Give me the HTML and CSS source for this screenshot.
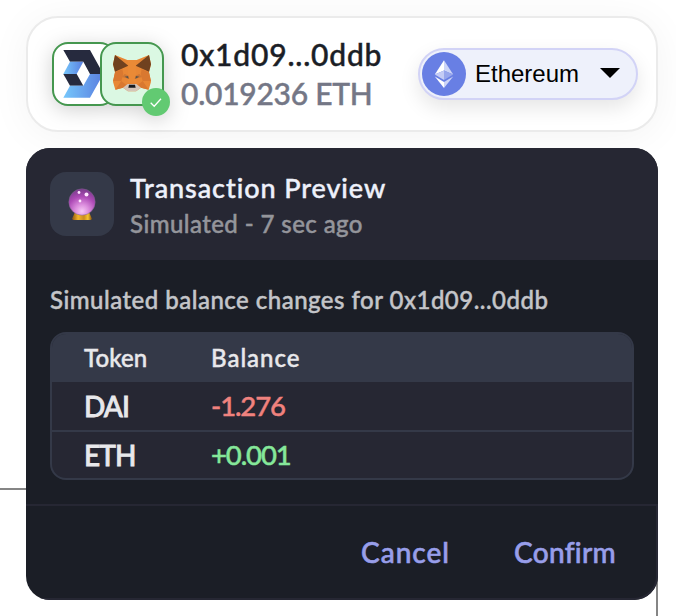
FILE: index.html
```html
<!DOCTYPE html>
<html lang="en">
<head>
<meta charset="utf-8">
<title>Transaction Preview</title>
<link rel="stylesheet" href="styles.css">
</head>
<body>
<div class="guide guide-left"></div>
<div class="guide guide-right"></div>
<main class="stack">
  <section class="account">
    <div class="wallets">
      <div class="wallet">
        <svg viewBox="42 42 180 180">
          <defs><linearGradient id="blue" x1="0" x2="1"><stop offset="0" stop-color="#76c7fb"/><stop offset="1" stop-color="#5a7fe0"/></linearGradient></defs>
          <path fill="#262a3e" d="M70 60H150L190 132H150L130 95H90Z"/>
          <path fill="url(#blue)" d="M90 95H130L110 132H70Z"/>
          <path fill="#262a3e" d="M70 132H110L130 167H90Z"/>
          <path fill="url(#blue)" d="M150 132H190L150 203H70L90 167H130Z"/>
        </svg>
      </div>
      <div class="wallet wallet-active">
        <svg viewBox="186 42 180 180">
          <path fill="#e88735" d="M225 75L262 90H290L327 75L333 103L327 127L333 155L326 179L303 173L288 184H264L249 173L226 179L219 155L225 127L219 103Z"/>
          <path fill="#70411f" d="M225 75L265 107L245 116L225 125L219 103ZM327 75L287 107L307 116L327 125L333 103Z"/>
          <path fill="#d97830" d="M225 127L247 118L250 132L244 153H219ZM327 127L305 118L302 132L308 153H333Z"/>
          <path fill="#ea8a36" d="M265 107L262 90H290L287 107L290 158H262Z"/>
          <path fill="#d97830" d="M244 153L226 179L249 173L259 165ZM308 153L326 179L303 173L293 165Z"/>
          <path fill="#ce7735" d="M246 141L254 132L266 137L268 147ZM306 141L298 132L286 137L284 147Z"/>
          <path fill="#5b5348" d="M254 140L264 138L266 146ZM298 140L288 138L286 146Z"/>
          <path fill="#d5c5b8" d="M249 173L263 162H289L303 173L288 184H264Z"/>
          <path fill="#171b20" d="M267 164H285L287 173H265Z"/>
        </svg>
      </div>
      <div class="badge"><svg viewBox="0 0 28 28"><path d="M8.7 14.8L12.2 18.2L19 10.8"/></svg></div>
    </div>
    <div class="account-text">
      <div class="address">0x1d09...0ddb</div>
      <div class="amount">0.019236 ETH</div>
    </div>
    <button class="network">
      <svg class="eth" viewBox="0 0 44 44">
        <circle cx="22" cy="22" r="22" fill="#687fe4"/>
        <path fill="#fff" d="M22 8.3L12.8 22.5L22 18.5Z"/>
        <path fill="#cdd5f7" d="M22 8.3L31.2 22.5L22 18.5Z"/>
        <path fill="#c4ccf5" d="M12.8 22.5L22 18.5V28Z"/>
        <path fill="#98a7ec" d="M31.2 22.5L22 18.5V28Z"/>
        <path fill="#fff" d="M12.8 24.5L22 30V36Z"/>
        <path fill="#cdd5f7" d="M31.2 24.5L22 30V36Z"/>
      </svg>
      <span class="network-name">Ethereum</span>
      <svg class="caret" viewBox="0 0 20 10"><path d="M0 0H20L10 10Z"/></svg>
    </button>
  </section>

  <section class="preview">
    <header class="preview-head">
      <div class="orb">
        <svg viewBox="0 0 30 34">
          <defs>
            <radialGradient id="ball" cx=".5" cy=".85" r=".85"><stop offset="0" stop-color="#f6c8f5"/><stop offset=".3" stop-color="#dc8ede"/><stop offset=".65" stop-color="#ad4ab6"/><stop offset="1" stop-color="#7a3a8c"/></radialGradient>
            <linearGradient id="gold" x1="0" x2="1"><stop offset="0" stop-color="#8d5514"/><stop offset=".3" stop-color="#f2b42a"/><stop offset=".6" stop-color="#c98b20"/><stop offset=".8" stop-color="#f7c52f"/><stop offset="1" stop-color="#84500f"/></linearGradient>
          </defs>
          <path fill="url(#gold)" d="M7.5 26H22.500L24.800 31.500Q25 33 23 33H7Q5 33 5.200 31.500Z"/>
          <circle cx="15" cy="15" r="13.200" fill="url(#ball)" stroke="#7d638d" stroke-width=".5"/>
          <circle cx="12" cy="5.500" r="1.400" fill="#ffe6ff"/>
          <circle cx="19.500" cy="7.500" r="2" fill="#ffe6ff"/>
          <circle cx="13" cy="14" r="1.400" fill="#ffe6ff"/>
        </svg>
      </div>
      <div>
        <h1 class="title">Transaction Preview</h1>
        <p class="subtitle">Simulated - 7 sec ago</p>
      </div>
    </header>
    <div class="preview-body">
      <p class="caption">Simulated balance changes for 0x1d09...0ddb</p>
      <div class="table">
        <div class="row row-head"><span class="th-token">Token</span><span class="th-balance">Balance</span></div>
        <div class="row"><span class="symbol">DAI</span><span class="negative">-1.276</span></div>
        <div class="row"><span class="symbol">ETH</span><span class="positive">+0.001</span></div>
      </div>
    </div>
    <footer class="actions">
      <button class="action cancel">Cancel</button>
      <button class="action confirm">Confirm</button>
    </footer>
  </section>
</main>
</body>
</html>
```
FILE: styles.css
```css
* { box-sizing: border-box; }
body {
  margin: 0;
  width: 676px;
  height: 616px;
  overflow: hidden;
  position: relative;
  background: #fff;
  font-family: Lato, "Liberation Sans", sans-serif;
  font-weight: 500;
  -webkit-text-stroke: 0.45px currentColor;
}
svg { display: block; }
h1, p { margin: 0; font-weight: inherit; }
button { font: inherit; border: 0; background: none; padding: 0; }

.guide { position: absolute; background: #858585; }
.guide-left { left: 0; top: 488px; width: 26px; height: 2px; }
.guide-right { left: 656px; top: 570px; width: 2px; height: 46px; }

.stack {
  position: relative;
  display: flex;
  flex-direction: column;
  gap: 16px;
  padding: 16px 18px 16px 26px;
}

.account {
  display: flex;
  align-items: center;
  height: 116px;
  padding: 0 18px 0 24px;
  border: 2px solid #ebebeb;
  border-radius: 32px;
  background: #fff;
  box-shadow: 0 4px 40px rgba(0, 0, 0, 0.05);
}
.wallets {
  position: relative;
  display: flex;
  flex: none;
  width: 112px;
  filter: drop-shadow(0 4px 10px rgba(0, 0, 0, 0.18));
}
.wallet {
  flex: none;
  width: 64px;
  height: 64px;
  overflow: hidden;
  border: 2px solid #45974f;
  border-radius: 16px;
  background: #fff;
}
.wallet-active { margin-left: -16px; background: #dbf8e3; }
.badge {
  position: absolute;
  right: -6px;
  bottom: -10px;
  width: 28px;
  height: 28px;
  border-radius: 50%;
  background: #62ca72;
}
.badge path { fill: none; stroke: #fff; stroke-width: 1.3; }

.account-text { flex: 1; padding-left: 17px; white-space: nowrap; }
.address, .amount { height: 40px; line-height: 40px; font-size: 30px; }
.address { color: #1b1e26; letter-spacing: 0.8px; }
.amount { line-height: 38px; color: #747786; letter-spacing: -0.25px; }

.network {
  display: flex;
  align-items: center;
  width: 220px;
  height: 52px;
  padding: 0 16px 0 2px;
  border: 2px solid #d2d3f6;
  border-radius: 26px;
  background: #eef1fb;
  box-shadow: 0 8px 20px rgba(0, 0, 0, 0.1);
  -webkit-text-stroke: 0;
}
.eth { width: 44px; height: 44px; }
.network-name {
  flex: 1;
  padding-left: 9px;
  text-align: left;
  font: 24px "Liberation Sans", Arial, sans-serif;
  color: #000;
}
.caret { width: 20px; height: 10px; margin-top: -2px; }

.preview {
  height: 452px;
  overflow: hidden;
  border-radius: 24px;
  background: #1b1e26;
  display: flex;
  flex-direction: column;
  white-space: nowrap;
}
.preview-head {
  display: flex;
  gap: 16px;
  height: 112px;
  padding: 24px;
  background: #262733;
}
.orb {
  display: grid;
  place-items: center;
  width: 64px;
  height: 64px;
  border-radius: 16px;
  background: #343948;
}
.orb svg { width: 30px; height: 34px; }
.title { height: 34px; line-height: 32px; font-size: 27px; color: #eef1fb; letter-spacing: 0.92px; }
.subtitle { height: 36px; line-height: 36px; font-size: 24px; color: #94959b; letter-spacing: 0.42px; }

.preview-body { height: 244px; padding: 24px 24px 0; }
.caption { height: 32px; margin-bottom: 16px; line-height: 32px; font-size: 24px; color: #c4c5c9; letter-spacing: 0.48px; }
.table {
  height: 148px;
  overflow: hidden;
  border: 2px solid #343948;
  border-radius: 16px;
  background: #262733;
}
.row {
  display: grid;
  grid-template-columns: 127px 1fr;
  align-items: center;
  height: 48px;
  padding-left: 32px;
  font-size: 28px;
  line-height: 44px;
  color: #e8e8eb;
}
.row-head { background: #343948; font-size: 24px; }
.th-token { letter-spacing: 0.1px; }
.th-balance { letter-spacing: 1px; }
.symbol { letter-spacing: -0.9px; -webkit-text-stroke-width: 0.8px; }
.row:last-child { height: 48px; border-top: 2px solid #343948; line-height: 42px; }
.negative, .positive { font-size: 27.5px; letter-spacing: -1.1px; }
.negative { color: #f0827e; }
.positive { color: #85e79a; }

.actions {
  display: flex;
  justify-content: flex-end;
  gap: 64px;
  flex: 1;
  padding-right: 40px;
  border: solid #262733;
  border-width: 2px 2px 2px 0;
  border-bottom-right-radius: 24px;
}
.action { color: #989eea; font-size: 28px; white-space: nowrap; text-align: left; -webkit-text-stroke: 0.6px currentColor; }
.cancel { width: 89px; letter-spacing: 1px; }
.confirm { width: 102px; letter-spacing: 0.3px; }
```
